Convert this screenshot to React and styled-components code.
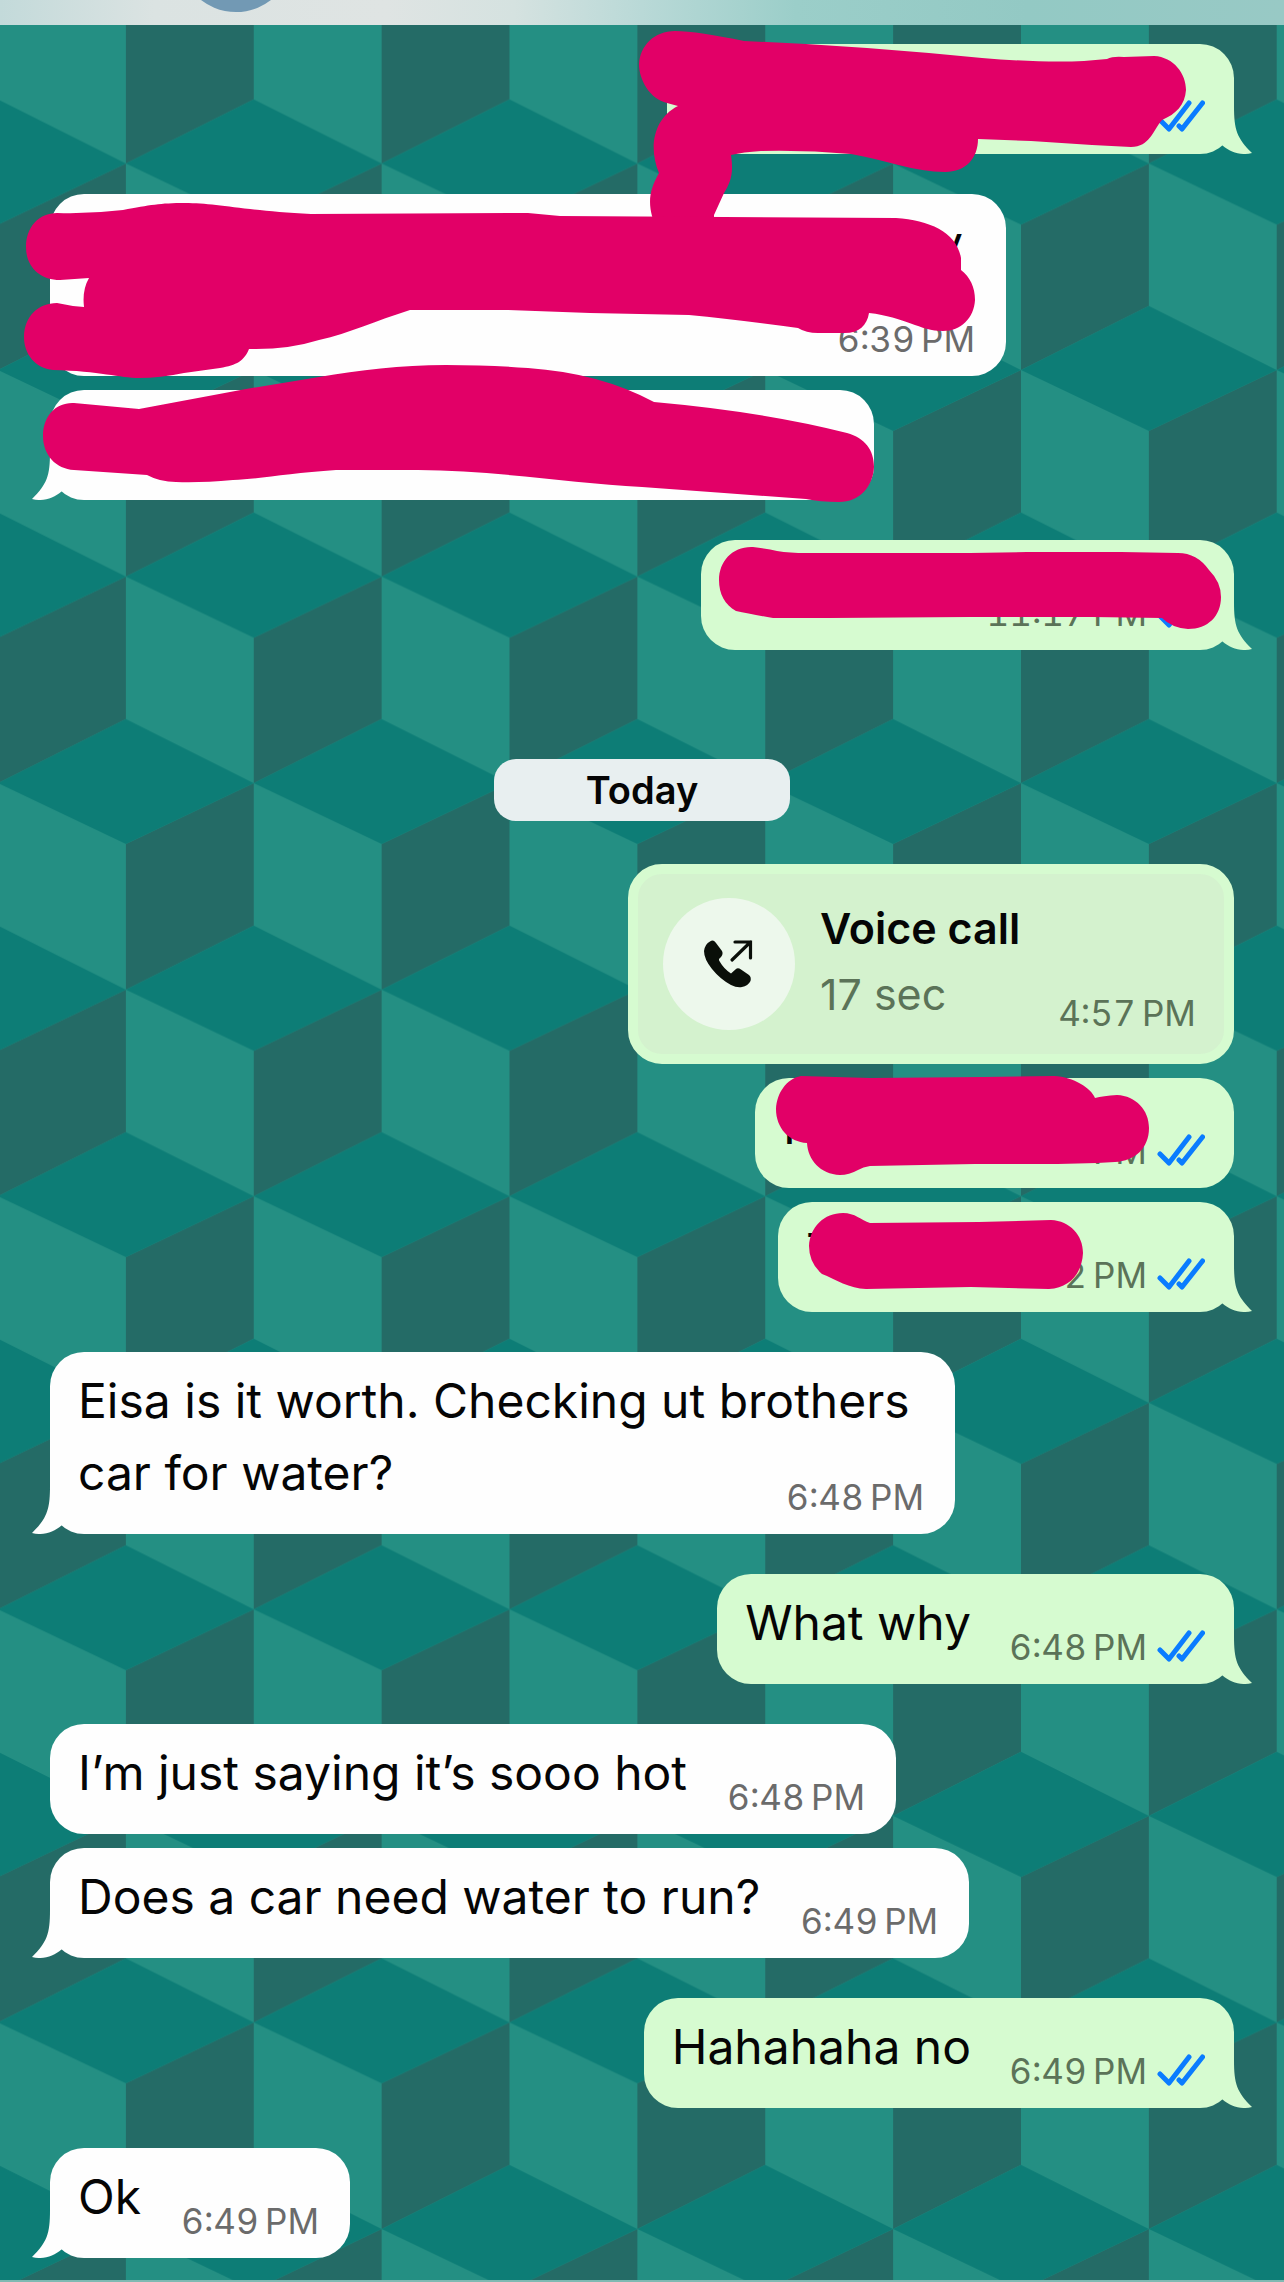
import React from 'react';
import styled, { createGlobalStyle } from 'styled-components';

const messages = [
  { id: 1, from: 'me', width: 567, start: true, tail: true, time: '', read: true, scribble: 'm1' },
  { id: 2, from: 'them', width: 956, start: true, lines: 2, text: 'y', alignEnd: true, time: '6:39\u202fPM', scribble: 'm2' },
  { id: 3, from: 'them', width: 824, tail: true, time: '', scribble: 'm3' },
  { id: 4, from: 'me', width: 533, start: true, tail: true, time: '11:17\u202fPM', read: true, scribble: 'm4' },
];

const todayMessages = [
  { id: 6, from: 'me', width: 479, text: 'I', time: 'PM', read: true, scribble: 'm6' },
  { id: 7, from: 'me', width: 456, tail: true, text: 'T', time: '02\u202fPM', read: true, scribble: 'm7' },
  { id: 8, from: 'them', width: 905, start: true, tail: true, text: 'Eisa is it worth. Checking ut brothers car for water?', time: '6:48\u202fPM' },
  { id: 9, from: 'me', start: true, tail: true, text: 'What why', time: '6:48\u202fPM', read: true },
  { id: 10, from: 'them', start: true, text: 'I’m just saying it’s sooo hot', time: '6:48\u202fPM' },
  { id: 11, from: 'them', tail: true, text: 'Does a car need water to run?', time: '6:49\u202fPM' },
  { id: 12, from: 'me', start: true, tail: true, text: 'Hahahaha no', time: '6:49\u202fPM', read: true },
  { id: 13, from: 'them', start: true, tail: true, text: 'Ok', time: '6:49\u202fPM' },
];

// marker strokes, the viewBox is the box of the bubble they are drawn on
const scribbles = {
  m1: {
    box: '667 44 567 110',
    d: 'M675 31 C690 31 715 35 744 41 L806 44 L867 48 L929 53 L982 58 Q1043 63 1084 61 L1107 59 Q1113 56 1124 57 L1154 56 C1174 57 1186 74 1186 90 C1185 105 1176 114 1162 120 C1153 130 1150 147 1131 147 L1092 145 L1031 141 L978 139 C978 158 966 172 945 172 C915 172 885 160 851 154 Q806 150 761 151 Q743 152 731 155 C734 175 730 183 724 193 L714 215 L714 240 L660 240 L652 216 C648 200 650 189 659 173 C648 147 654 118 678 106 L667 103 C650 99 639 80 639 64 C640 46 654 31 675 31 Z',
  },
  m2: {
    box: '50 194 956 182',
    d: 'M57 213 Q90 214 123 210 C150 205 160 203 185 203 C215 203 240 210 311 214 L528 213 L560 216 L896 218 C930 220 957 233 961 258 L961 270 C970 277 975 287 975 300 C974 318 961 331 943 331 C920 331 905 317 869 313 C867 326 858 334 842 333 L818 333 Q806 333 798 328 Q740 320 689 315 L590 313 L508 310 L410 310 C375 321 350 333 319 340 Q287 350 249 349 C244 361 237 365 220 368 L184 373 Q160 378 139 378 C120 378 100 371 53 370 C35 368 24 354 24 337 C24 317 38 303 57 303 Q70 306 84 307 Q82 290 89 278 L60 280 C40 280 26 267 26 247 C26 227 39 213 57 213 Z',
  },
  m3: {
    box: '50 390 824 110',
    d: 'M74 403 L139 409 L246 389 L319 377 C360 370 400 365 446 365 Q490 365 528 368 Q600 373 654 402 Q765 412 847 433 C865 438 874 450 874 467 C873 486 860 502 839 502 Q820 502 806 499 L724 493 L642 487 C570 483 490 470 418 470 L336 470 C290 473 260 479 233 480 Q200 483 176 482 Q160 482 147 475 L74 470 C56 469 43 455 43 436 C43 416 56 402 74 403 Z',
  },
  m4: {
    box: '701 540 533 110',
    d: 'M753 547 Q768 549 777 551 Q790 553 806 553 L970 553 L1027 552 L1121 552 L1178 553 Q1197 553 1209 570 Q1221 582 1221 597 C1221 616 1208 629 1188 629 Q1172 628 1162 618 L1092 617 L970 617 L830 618 L773 618 Q750 614 736 611 C725 605 719 594 719 580 C719 561 733 546 753 547 Z',
  },
  m6: {
    box: '755 1078 479 110',
    d: 'M801 1076 L870 1078 L984 1077 L1054 1076 C1074 1077 1091 1088 1095 1098 Q1103 1096 1117 1095 C1136 1096 1149 1110 1149 1128 C1149 1148 1135 1161 1115 1162 Q1080 1164 1036 1164 L975 1164 L870 1166 Q863 1167 858 1170 Q849 1175 840 1175 C820 1174 808 1160 807 1143 C789 1142 776 1128 776 1109 C777 1093 786 1079 801 1076 Z',
  },
  m7: {
    box: '778 1202 456 110',
    d: 'M843 1213 C855 1213 861 1220 870 1223 L979 1222 L1051 1220 C1070 1221 1083 1235 1083 1253 C1082 1273 1070 1288 1049 1289 L971 1287 L866 1289 C850 1289 835 1279 822 1274 Q809 1263 809 1246 C810 1227 824 1213 843 1213 Z',
  },
};

function Wallpaper() {
  return (
    <Pattern aria-hidden="true">
      <defs>
        <pattern id="cubes" x="125.9" y="163.5" width="255.74" height="413.1" patternUnits="userSpaceOnUse">
          <rect width="256" height="414" fill="#248f83" />
          <path d="M127.87 61 L255.74 0 V142.5 L127.87 206.55 Z" fill="#246b66" />
          <path d="M0 267.5 L127.87 206.55 V349 L0 413.1 Z" fill="#246b66" />
          <path d="M0 0 H255.74 L127.87 61 Z" fill="#0d7d76" />
          <path d="M0 413.1 L127.87 349 L255.74 413.1 Z" fill="#0d7d76" />
          <path d="M0 142.5 L127.87 206.55 L0 267.5 Z" fill="#0d7d76" />
          <path d="M255.74 142.5 L127.87 206.55 L255.74 267.5 Z" fill="#0d7d76" />
        </pattern>
      </defs>
      <rect width="100%" height="100%" fill="url(#cubes)" />
    </Pattern>
  );
}

function Ticks() {
  return (
    <TicksIcon viewBox="0 0 48 34" role="img" aria-label="Read">
      <path d="M3 20 L12 29 L32 3" />
      <path d="M22 26 L25 29 L45.5 3" />
    </TicksIcon>
  );
}

function Message({ message }) {
  const { from, text, time, read, tail, scribble } = message;
  return (
    <Row $from={from} $start={message.start}>
      <Bubble $from={from} $width={message.width}>
        <Text $lines={message.lines} $alignEnd={message.alignEnd}>
          {text}
          {!message.width && <Spacer $read={read} />}
        </Text>
        <Meta $from={from}>
          <time>{time}</time>
          {read && <Ticks />}
        </Meta>
        {tail && (
          <Tail $from={from} viewBox="0 0 60 60" aria-hidden="true">
            <path d="M18 12 C18 36 15 44 0 59 C11 62 22 58 29.5 51.5 L42 40 Z" />
          </Tail>
        )}
        {scribble && (
          <Scribble viewBox={scribbles[scribble].box} aria-hidden="true">
            <path d={scribbles[scribble].d} />
          </Scribble>
        )}
      </Bubble>
    </Row>
  );
}

function VoiceCall() {
  return (
    <Row $from="me" $first>
      <CallBubble>
        <CallIcon>
          <svg width="50" height="50" viewBox="0 -1 50 50" aria-hidden="true">
            <path
              d="M9 0.5 Q11 1 12 3 L18 11 Q19.5 14 17 17 L15 19 Q14.5 20 16 22 Q20 29 27 33.5 L32 29 Q34 27.5 37 29.5 L45 35 Q47.5 37 46.5 41 Q44 46 38 47 Q33 48 27 45 Q16 39 8 29 Q0 19 0 11 Q1 4 6 1.5 Q7 0.5 9 0.5 Z"
              fill="#0a0f09"
            />
            <path d="M28 20 L46.5 2 M31 2 H46.5 V18" fill="none" stroke="#0a0f09" strokeWidth="3.2" strokeLinecap="round" />
          </svg>
        </CallIcon>
        <CallInfo>
          <CallTitle>Voice call</CallTitle>
          <CallLength>17 sec</CallLength>
        </CallInfo>
        <CallTime>4:57{'\u202f'}PM</CallTime>
      </CallBubble>
    </Row>
  );
}

function App() {
  return (
    <Page>
      <GlobalStyle />
      <Wallpaper />
      <Header>
        <Avatar />
      </Header>
      <Thread>
        {messages.map((message) => (
          <Message key={message.id} message={message} />
        ))}
        <DayLabel>Today</DayLabel>
        <VoiceCall />
        {todayMessages.map((message) => (
          <Message key={message.id} message={message} />
        ))}
      </Thread>
      <Footer />
    </Page>
  );
}

export default App;


const GlobalStyle = createGlobalStyle`
*{
  box-sizing: border-box;
}
body{
  margin: 0;
  font-family: Inter, "Liberation Sans", sans-serif;
  color: #050505;
}
`
const Page = styled.div`
position: relative;
display: flex;
flex-direction: column;
min-height: 100vh;
overflow: hidden;
background-color: #248f83;
`
const Pattern = styled.svg`
position: absolute;
top: 0;
left: 0;
width: 100%;
height: 100%;
`
const Header = styled.header`
position: relative;
height: 25px;
overflow: hidden;
background: linear-gradient(90deg, #c3dada 0%, #dbe3e2 12%, #dfe4e3 30%, #d5e2e0 40%, #b9d9d7 50%, #9bcec9 62%, #93c9c4 80%, #98c9c5 100%);
`
const Avatar = styled.div`
width: 114px;
height: 114px;
margin: -102px 0 0 179px;
border-radius: 50%;
background-color: #7299b4;
`
const Thread = styled.main`
position: relative;
display: flex;
flex: 1;
flex-direction: column;
padding: 0 50px 22px;
`
const Footer = styled.footer`
position: relative;
height: 2px;
background-color: #7fb9b2;
`
const Row = styled.div`
display: flex;
justify-content: ${({ $from }) => ($from === 'me' ? 'flex-end' : 'flex-start')};
margin-top: ${({ $start, $first }) => ($first ? 43 : $start ? 40 : 14)}px;
&:first-child{
  margin-top: 19px;
}
`
const Bubble = styled.article`
position: relative;
display: grid;
width: ${({ $width }) => ($width ? `${$width}px` : 'auto')};
max-width: 960px;
padding: 13px 31px 25px 28px;
border-radius: 34px;
background-color: ${({ $from }) => ($from === 'me' ? '#d6fbd0' : '#fefefe')};
`
const Text = styled.p`
grid-area: 1 / 1;
min-height: ${({ $lines }) => ($lines || 1) * 72}px;
margin: 0;
padding-right: ${({ $alignEnd }) => ($alignEnd ? 12 : 0)}px;
font-size: 48px;
line-height: 72px;
text-align: ${({ $alignEnd }) => ($alignEnd ? 'right' : 'left')};
`
const Spacer = styled.span`
display: inline-block;
width: ${({ $read }) => ($read ? 232 : 178)}px;
`
const Meta = styled.div`
grid-area: 1 / 1;
display: flex;
align-self: end;
justify-self: end;
gap: 10px;
margin-bottom: -5px;
font-size: 35px;
font-variant-numeric: tabular-nums;
line-height: 34px;
white-space: nowrap;
color: ${({ $from }) => ($from === 'me' ? '#5b7358' : '#6b6b6b')};
`
const TicksIcon = styled.svg`
width: 48px;
height: 34px;
margin-right: -2px;
fill: none;
stroke: #0a7cff;
stroke-width: 5;
stroke-linecap: round;
stroke-linejoin: round;
`
const Tail = styled.svg`
position: absolute;
bottom: 0;
left: ${({ $from }) => ($from === 'me' ? 'auto' : '-18px')};
right: ${({ $from }) => ($from === 'me' ? '-18px' : 'auto')};
width: 60px;
height: 60px;
transform: ${({ $from }) => ($from === 'me' ? 'scaleX(-1)' : 'none')};
fill: ${({ $from }) => ($from === 'me' ? '#d6fbd0' : '#fefefe')};
`
const Scribble = styled.svg`
position: absolute;
top: 0;
left: 0;
z-index: 1;
width: 100%;
height: 100%;
overflow: visible;
fill: #e20067;
pointer-events: none;
`
const DayLabel = styled.div`
align-self: center;
width: 296px;
margin-top: 109px;
border-radius: 22px;
background-color: #e8eff0;
font-size: 38px;
font-weight: 600;
line-height: 62px;
text-align: center;
`
const CallBubble = styled.article`
display: flex;
align-items: center;
width: 606px;
height: 200px;
padding: 0 28px 0 25px;
border: 10px solid #d6fbd0;
border-radius: 34px;
background-color: #d4f2ce;
`
const CallIcon = styled.div`
display: flex;
align-items: center;
justify-content: center;
width: 132px;
height: 132px;
border-radius: 50%;
background-color: #edf8ec;
`
const CallInfo = styled.div`
flex: 1;
margin-left: 25px;
padding-bottom: 6px;
`
const CallTitle = styled.div`
font-size: 43px;
font-weight: 600;
line-height: 66px;
`
const CallLength = styled.div`
font-size: 43px;
line-height: 66px;
color: #5b7358;
`
const CallTime = styled.time`
align-self: flex-end;
margin-bottom: 24px;
font-size: 35px;
font-variant-numeric: tabular-nums;
line-height: 34px;
color: #5b7358;
`
